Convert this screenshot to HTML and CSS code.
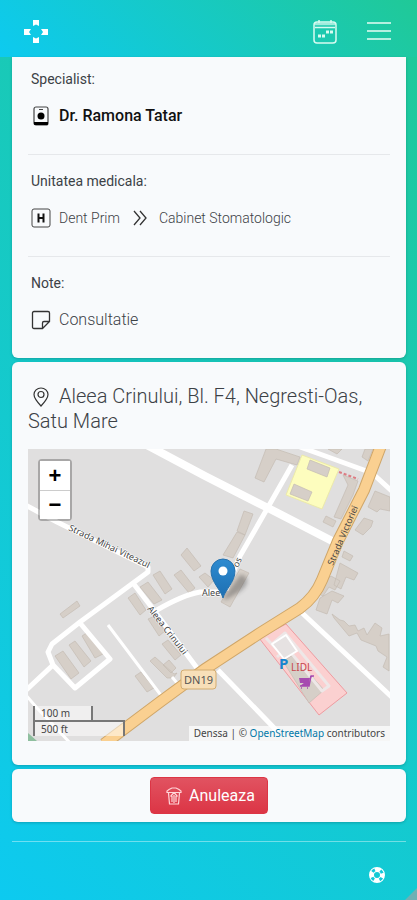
FILE: index.html
```html
<!DOCTYPE html>
<html lang="ro">
<head>
<meta charset="utf-8">
<meta name="viewport" content="width=device-width, initial-scale=1">
<title>Programare</title>
<link rel="stylesheet" href="styles.css">
</head>
<body>
<header class="topbar">
  <a class="icon-link" href="#" aria-label="Acasa">
    <svg width="24" height="24" viewBox="0 0 24 24" fill="#fff"><path d="M9 0h6v6l-3-1.500L9 6zM9 23h6v-6l-3 1.500L9 17zM0 9h7l-2 3 2 3H0zM24 9h-7l2 3-2 3h7z"/></svg>
  </a>
  <nav class="topbar-actions">
    <a class="icon-link" href="#" aria-label="Calendar">
      <svg width="24" height="24" viewBox="0 0 24 24" fill="none" stroke="#d8fbf1" stroke-width="1.500"><rect x="1" y="2" width="22" height="21" rx="3"/><path d="M2 4h20" stroke-width="2.500" opacity=".7"/><path d="M2 7.500h20M6 0v3M18 0v3"/><path d="M5 16h3M9 16h3M13 12h3M17 12h3" stroke-width="3"/></svg>
    </a>
    <button class="icon-button" type="button" aria-label="Meniu">
      <svg width="24" height="24" viewBox="0 0 24 24" stroke="#b4f0e0" stroke-width="2"><path d="M0 3h24M0 11h24M0 19h24"/></svg>
    </button>
  </nav>
</header>
<main class="content">
  <section class="card details">
    <div class="detail">
      <h2 class="label">Specialist:</h2>
      <p class="row strong">
        <svg class="icon" width="20" height="20" viewBox="0 0 20 20"><rect x="3" y="1" width="14" height="18" rx="2" fill="none" stroke="#444" stroke-width="1.200"/><path d="M8 3.500h4" stroke="#444"/><circle cx="10" cy="10" r="3.500"/><path d="M3 16h14v2q0 1-1 1H4q-1 0-1-1z"/></svg>
        <span>Dr. Ramona Tatar</span>
      </p>
    </div>
    <div class="detail">
      <h2 class="label">Unitatea medicala:</h2>
      <p class="row small">
        <svg class="icon" width="20" height="20" viewBox="0 0 20 20" fill="none" stroke="#444"><rect x="1" y="1" width="18" height="18" rx="2"/><path d="M7.500 5.500v9M12.500 5.500v9M7.500 10h5" stroke="#111" stroke-width="2"/></svg>
        <span>Dent Prim</span>
        <svg class="chevrons" width="14" height="18" viewBox="0 0 14 18" fill="none" stroke="#333" stroke-width="1.300"><path d="M1 2l6 7-6 7M7 2l6 7-6 7"/></svg>
        <span>Cabinet Stomatologic</span>
      </p>
    </div>
    <div class="detail">
      <h2 class="label">Note:</h2>
      <p class="row">
        <svg class="icon" width="20" height="20" viewBox="0 0 20 20" fill="none" stroke="#333" stroke-width="1.300"><path d="M3 1.500h14q1.500 0 1.500 1.500v8.500l-7 7H3q-1.500 0-1.500-1.500V3Q1.500 1.500 3 1.500zM11.500 18v-5q0-1.500 1.500-1.500h5"/></svg>
        <span>Consultatie</span>
      </p>
    </div>
  </section>

  <section class="card place">
    <h2 class="address"><svg class="pin" width="16" height="20" viewBox="0 0 16 20" fill="none" stroke="#333" stroke-width="1.200"><path d="M8 19Q1 11.500 1 7.500a7 6.500 0 0 1 14 0Q15 11.500 8 19z"/><circle cx="8" cy="7.500" r="3"/></svg>Aleea Crinului, Bl. F4, Negresti-Oas, Satu Mare</h2>
    <div class="map">
      <svg class="map-canvas" viewBox="28 449 362 292" preserveAspectRatio="xMidYMid slice" role="img" aria-label="Harta">
        <defs>
          <path id="mihai" d="M68 530L150 569 160 574"/>
          <path id="crin" d="M147 609L190 664"/>
          <path id="victoriei" d="M333 566L364 494"/>
          <linearGradient id="marker" x2="0" y2="1"><stop stop-color="#2e8bd0"/><stop offset="1" stop-color="#1d6fb2"/></linearGradient>
          <filter id="soft"><feGaussianBlur stdDeviation="2"/></filter>
        </defs>
        <path fill="#e0dfdf" d="M28 449h362v292H28z"/>
        <path fill="#8fbf9f" d="M28 733l9 8h-9z"/>
        <path fill="#fdfdbe" stroke="#eceaaa" d="M302 455l37 14-17 40-36-14z"/>
        <path fill="#fbd0d0" stroke="#ef9ba0" d="M259 638l27-14 61 69-28 22z"/>
        <g fill="#d6cfc8" stroke="#c4bbb3" stroke-width=".7">
          <path d="M266 449h10l24 8-3 8-21-6-12 23-9-4zM310 460l20 8-3 9-20-8zM294 484l18 8-4 9-18-7zM328 449h14l-5 5zM365 449h8l-5 12-6-4zM343 475l15 6-5 14-12 24-7-2 14-32zM326 516l10 5-3 6-10-5zM375 491l15 6v14l-10-2-3 3-9-5zM364 518l9 3-2 6-8 8-8-5zM344 551l9 5-3 5-8-4z"/>
          <path d="M340 563l18 10-4 7-8-3-5 12-7-4zM331 576l9 5-5 9-6-3-6 9-8-4zM320 598l12-7 12 5-6 7-6-3-5 14-11-4zM332 614l8 6 4 1 5 5 6-1 3 6 6-3 3 7 8-12 7 5-2 8 9-2v37l-6-4 4-10-9-6-2-5-15-6-4-7-8 3-15-18z"/>
          <path d="M244 511l9 3-8 21-8-4zM237 532l8 3-12 23-10-3zM240 569l9 4-19 34-9-5zM181 555l6-7 14 18-7 5zM153 575l7-4 12 18-7 5zM174 575l7-5 14 18-6 5zM199 577l6-4 9 7-6 7zM140 587l8-5 14 18-8 4zM128 598l7-5 11 17-6 5zM60 614l17-13 3 5-17 12zM148 619l7-3 10 15-6 5zM162 644l6-4 13 15-6 5zM150 661l5-4 19 17 3-1-4 5h-6zM163 665l6-5 7 8-5 5zM135 676l6-4 13 16-7 4zM55 656l8-5 16 22-8 6zM69 645l6-4 16 20-7 6zM82 636l6-4 15 22-8 4z"/>
          <path d="M293 655l31 35-15 13-26-42z"/>
        </g>
        <g fill="none" stroke="#fff" stroke-linejoin="round">
          <path stroke-width="8" d="M143 443L205 476 268 508 336 543"/>
          <path stroke-width="5" d="M292 465L267 509 240 556 226 590M300 447l28 10 44 16 22 20M20 502l37 20 91 45v5l-38 28-30 22-28 22-4 8 5 13-30 28M53 665l22 23 35-29-30-36M133 583l20 26 44 59M157 610q26-15 43-18h23M218 670l60 62M300 611l96 90"/>
          <path stroke-width="3" d="M108 625l55 73M172 677l10 12M25 694l12 14 36 38"/>
          <path stroke-width="3" stroke="#eee7e7" d="M266 638l16 17M271 645l14-12 44 53-7 5-38-47M277 657l17-15"/>
          <path fill="#e6e2e2" stroke-width="2" d="M272 644l14-9 11 16-13 8z"/>
        </g>
        <path fill="none" stroke="#cfa669" stroke-width="12" d="M382 443L364 490 338 541 322 580Q315 597 300 608L260 633 205 669 160 702 104 744"/>
        <path fill="none" stroke="#fad091" stroke-width="10" d="M382 443L364 490 338 541 322 580Q315 597 300 608L260 633 205 669 160 702 104 744"/>
        <path stroke="#dc7c83" stroke-width="2" stroke-dasharray="3 2" d="M339 472l19 7"/>
        <g class="street">
          <text><textPath href="#mihai">Strada Mihai Viteazul</textPath></text>
          <text><textPath href="#crin">Aleea Crinului</textPath></text>
          <text class="street-main"><textPath href="#victoriei">Strada Victoriei</textPath></text>
          <text x="202" y="596">Alee</text>
          <text transform="translate(238 568) rotate(-65)">os</text>
        </g>
        <rect x="181" y="670" width="35" height="19" rx="3" fill="#f8dfb8" stroke="#d2ac70"/>
        <text class="route" x="184" y="684">DN19</text>
        <text class="parking" x="279" y="669">P</text>
        <text class="shop" x="291" y="671">LIDL</text>
        <path d="M299 678h11l-1 5h-9zM313 676h-3l-1 10h-9" fill="#a64bb0"/>
        <path d="M314 676h-3l-2 10h-9M301 688h1M307 688h1" fill="none" stroke="#a64bb0" stroke-width="1.500"/>
        <path d="M223 598l17-23q7-1 7 7-1 8-22 18z" fill="#333" opacity=".35" filter="url(#soft)"/>
        <path d="M223 598c-2-8-12-16-12-27a12 12 0 0 1 24 0c0 11-10 19-12 27z" fill="url(#marker)" stroke="#2671ad"/>
        <circle cx="223" cy="571" r="4.500" fill="#fff"/>
      </svg>
      <div class="zoom">
        <button type="button" aria-label="Mareste">+</button>
        <button type="button" aria-label="Micsoreaza">−</button>
      </div>
      <div class="scale">
        <div class="scale-metric">100 m</div>
        <div class="scale-imperial">500 ft</div>
      </div>
      <div class="attribution">Denssa | © <a href="#">OpenStreetMap</a> contributors</div>
    </div>
  </section>

  <section class="card actions">
    <button class="cancel" type="button">
      <svg width="16" height="18" viewBox="0 0 16 18" fill="none" stroke="#ffd5d8" stroke-width="1.200"><path d="M1 5.500V4l2-1.500L6 1h4l3 1.500L15 4v1.500zM2.500 6l1 11h9l1-11M8 5.500L4.500 9.500M8 5.500l3.500 4M6 9v6M10 9v6M8 8v8"/></svg>
      <span>Anuleaza</span>
    </button>
  </section>
</main>
<footer class="footer">
  <a class="icon-link" href="#" aria-label="Ajutor">
    <svg width="18" height="18" viewBox="0 0 18 18" fill="none"><circle cx="9" cy="9" r="5.500" stroke="#fff" stroke-width="5"/><circle cx="9" cy="9" r="5.500" stroke="#12c9da" stroke-width="3" stroke-dasharray="3 5.640" stroke-dashoffset="-2.820"/></svg>
  </a>
</footer>
<svg class="corner" width="12" height="12" viewBox="0 0 12 12" aria-hidden="true"><path fill="#6fb0b4" d="M12 0v12H0z"/></svg>
</body>
</html>
```
FILE: styles.css
```css
* {
  box-sizing: border-box;
}

body {
  margin: 0;
  min-height: 100vh;
  position: relative;
  font-family: Roboto, "Liberation Sans", sans-serif;
  font-size: 16px;
  line-height: 24px;
  color: #3c4146;
  background: linear-gradient(45deg, #0dcaf0, #20c997);
}

h2,
p {
  margin: 0;
}

.topbar {
  display: flex;
  align-items: center;
  justify-content: space-between;
  padding: 20px 26px 13px 24px;
  background: linear-gradient(45deg, #0dcaf0, #20c997);
}

.topbar-actions {
  display: flex;
  gap: 30px;
}

.icon-link,
.icon-button {
  display: block;
  padding: 0;
  border: 0;
  background: none;
}

.icon-link svg,
.icon-button svg {
  display: block;
}

.content {
  display: flex;
  flex-direction: column;
  gap: 4px;
  padding: 0 11px 0 12px;
}

.card {
  border-radius: 6px;
  background: #f8fafc;
  box-shadow: 0 1px 3px rgba(0, 0, 0, 0.2);
}

.details {
  border-radius: 0 0 6px 6px;
  padding: 0 16px;
}

.detail {
  padding: 16px 3px 26px;
}

.detail:first-child {
  padding-top: 12px;
}

.detail + .detail {
  border-top: 1px solid #e6e8eb;
}

.label {
  margin-bottom: 15px;
  font-size: 14px;
  line-height: 20px;
  font-weight: 400;
}

.row {
  display: flex;
  align-items: center;
  gap: 8px;
  font-weight: 300;
}

.strong {
  font-weight: 500;
  color: #111;
}

.small {
  font-size: 14px;
}

.chevrons {
  margin: 0 4px 0 5px;
}

.place {
  padding: 22px 16px 24px;
}

.address {
  margin-bottom: 15px;
  font-size: 20px;
  line-height: 25px;
  font-weight: 300;
}

.pin {
  margin: 0 10px 0 5px;
  vertical-align: -4px;
}

.map {
  position: relative;
}

.map-canvas {
  display: block;
  width: 100%;
  height: auto;
}

.street {
  font-family: "Noto Sans", sans-serif;
  font-size: 9px;
  fill: #444;
  stroke: #fff;
  stroke-width: 1px;
  paint-order: stroke;
}

.street-main {
  stroke: #fad091;
}

.route {
  font: 11px "Noto Sans", sans-serif;
  fill: #555;
}

.parking {
  font: 700 15px "Noto Sans", sans-serif;
  fill: #1685cf;
}

.shop {
  font: 10px "Noto Sans", sans-serif;
  fill: #c8454d;
}

.zoom {
  position: absolute;
  top: 10px;
  left: 10px;
  display: flex;
  flex-direction: column;
  border: 2px solid rgba(0, 0, 0, 0.25);
  border-radius: 4px;
}

.zoom button {
  width: 30px;
  height: 29px;
  padding: 0;
  border: 0;
  background: #fff;
  color: #000;
  font: 700 22px/28px "Liberation Sans", sans-serif;
}

.zoom button + button {
  border-top: 1px solid #ccc;
}

.scale {
  position: absolute;
  left: 5px;
  bottom: 5px;
  font: 10px/14px "Noto Sans", sans-serif;
  color: #444;
}

.scale div {
  padding: 0 6px;
  border: 2px solid #777;
  background: rgba(255, 255, 255, 0.5);
}

.scale .scale-metric {
  width: 60px;
  border-top: 0;
  border-bottom: 0;
}

.scale .scale-imperial {
  width: 92px;
  border-bottom: 0;
}

.attribution {
  position: absolute;
  right: 0;
  bottom: 0;
  padding: 0 5px;
  background: rgba(255, 255, 255, 0.7);
  font: 10px/15px "Noto Sans", sans-serif;
  color: #444;
}

.attribution a {
  color: #0078a8;
  text-decoration: none;
}

.actions {
  display: flex;
  justify-content: center;
  padding: 8px;
}

.cancel {
  display: flex;
  align-items: center;
  gap: 7px;
  padding: 6px 12px 5px 15px;
  border: 1px solid #dc3545;
  border-radius: 4px;
  background: linear-gradient(#e15361, #dc3545);
  color: #fff;
  font: 400 16px/24px Roboto, "Liberation Sans", sans-serif;
}

.footer {
  display: flex;
  justify-content: flex-end;
  margin: 19px 11px 0 12px;
  padding: 24px 20px 16px;
  border-top: 1px solid rgba(255, 255, 255, 0.4);
}

.corner {
  position: absolute;
  right: 0;
  bottom: 0;
}
```
